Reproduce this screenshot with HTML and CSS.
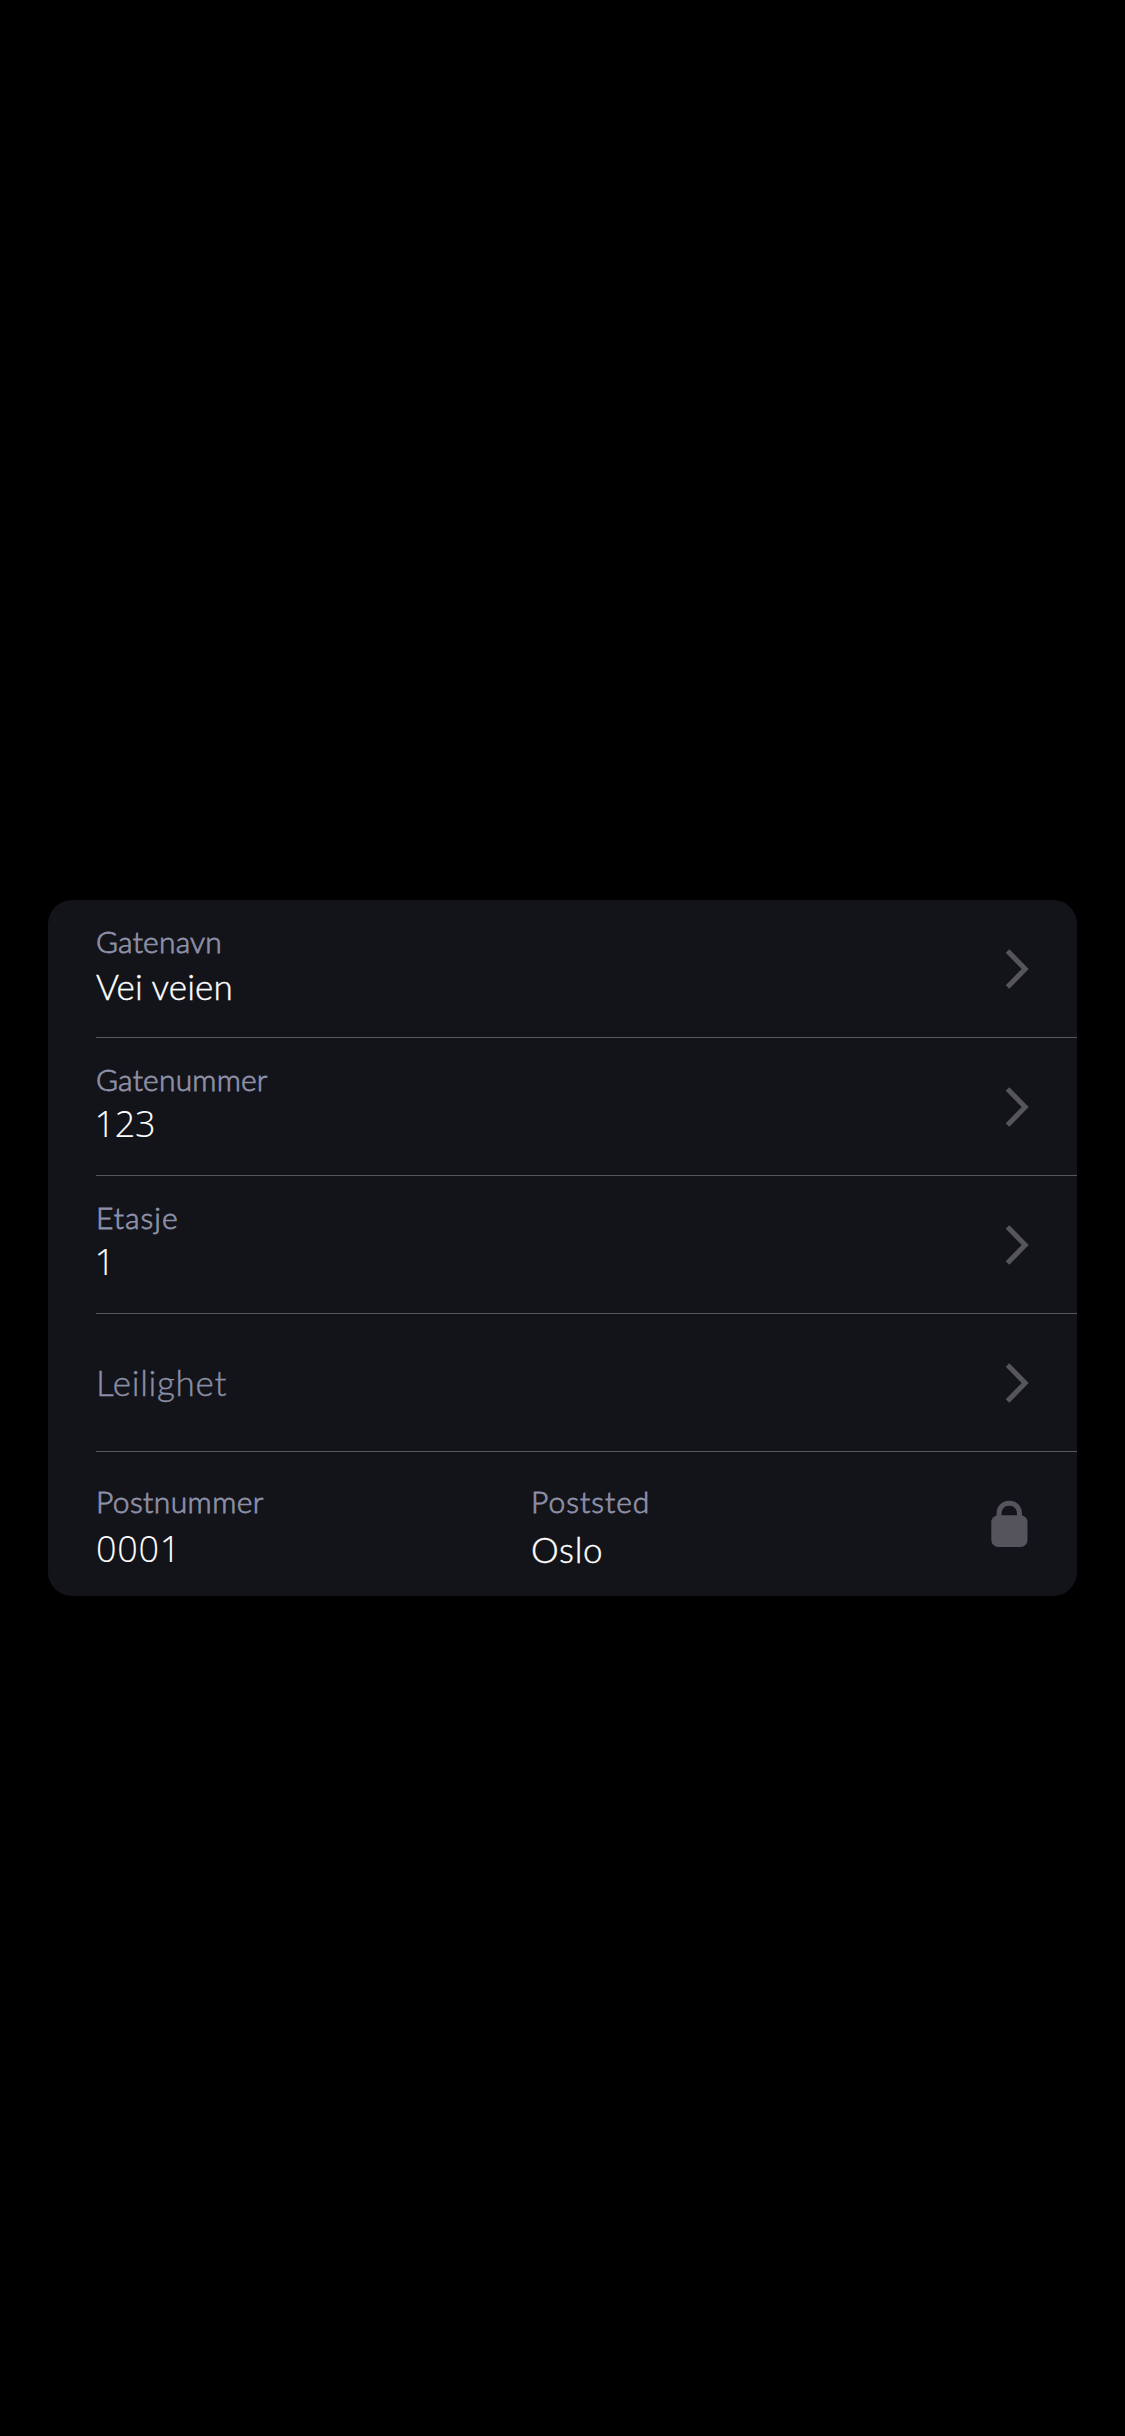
FILE: index.html
```html
<!DOCTYPE html>
<html lang="no">
<head>
<meta charset="utf-8">
<title>Adresse</title>
<link rel="stylesheet" href="styles.css">
</head>
<body>
<main class="card">
  <div class="row">
    <div class="field"><span class="label">Gatenavn</span><span class="value">Vei veien</span></div>
    <svg class="chevron" viewBox="0 0 24 40"><path d="M2.500 2 20.200 20 2.500 38"/></svg>
  </div>
  <div class="row">
    <div class="field"><span class="label">Gatenummer</span><span class="value number">123</span></div>
    <svg class="chevron" viewBox="0 0 24 40"><path d="M2.500 2 20.200 20 2.500 38"/></svg>
  </div>
  <div class="row">
    <div class="field"><span class="label etasje">Etasje</span><span class="value number">1</span></div>
    <svg class="chevron" viewBox="0 0 24 40"><path d="M2.500 2 20.200 20 2.500 38"/></svg>
  </div>
  <div class="row">
    <div class="field single"><span class="value placeholder">Leilighet</span></div>
    <svg class="chevron" viewBox="0 0 24 40"><path d="M2.500 2 20.200 20 2.500 38"/></svg>
  </div>
  <div class="row postal">
    <div class="field code"><span class="label postnummer">Postnummer</span><span class="value zip">0001</span></div>
    <div class="field"><span class="label poststed">Poststed</span><span class="value city">Oslo</span></div>
    <svg class="lock" viewBox="0 0 37 48"><path class="shackle" d="M8 17V14.500C8 7.500 12 3.200 18.250 3.200S28.500 7.500 28.500 14.500V17"/><rect x=".3" y="15.200" width="36.200" height="31.800" rx="7"/></svg>
  </div>
</main>
</body>
</html>
```
FILE: styles.css
```css
body {
  margin: 0;
  padding: 900px 48px 0;
  background: #000;
  font-family: Lato, "Liberation Sans", sans-serif;
}
.card {
  height: 696px;
  border-radius: 24px;
  background: #131419;
}
.row {
  display: flex;
  align-items: center;
  box-sizing: border-box;
  height: 138px;
  margin-left: 48px;
  padding-right: 48px;
  border-bottom: 1px solid #56565b;
}
.field {
  display: flex;
  flex: 1;
  flex-direction: column;
  gap: 6px;
  padding-bottom: 8px;
}
.single { padding-bottom: 2px; }
.label {
  color: #8d90a8;
  font-size: 30px;
  font-weight: 300;
  line-height: 36px;
  letter-spacing: .2px;
  -webkit-text-stroke: .8px;
}
.value {
  color: #fff;
  font-size: 35px;
  font-weight: 300;
  line-height: 42px;
  letter-spacing: .1px;
  -webkit-text-stroke: .4px;
}
.number,
.zip {
  font-family: "Open Sans", sans-serif;
  font-size: 36px;
  -webkit-text-stroke: .1px;
}
.number {
  margin-left: -1.500px;
  letter-spacing: -.3px;
}
.zip { letter-spacing: .7px; }
.etasje, .poststed { letter-spacing: 1px; }
.postnummer { letter-spacing: .4px; }
.city { letter-spacing: .7px; }
.placeholder {
  color: #8b8fa8;
  letter-spacing: .7px;
}
.chevron {
  width: 24px;
  height: 40px;
  fill: none;
  stroke: #55555b;
  stroke-width: 5;
}
.postal {
  height: 144px;
  border-bottom: 0;
}
.postal .field {
  gap: 9px;
  padding: 4px 0 0;
}
.postal .code { flex: 0 0 435px; }
.lock {
  width: 37px;
  height: 48px;
  margin-right: 1px;
  fill: #55545d;
}
.shackle {
  fill: none;
  stroke: #55545d;
  stroke-width: 5;
}
```
